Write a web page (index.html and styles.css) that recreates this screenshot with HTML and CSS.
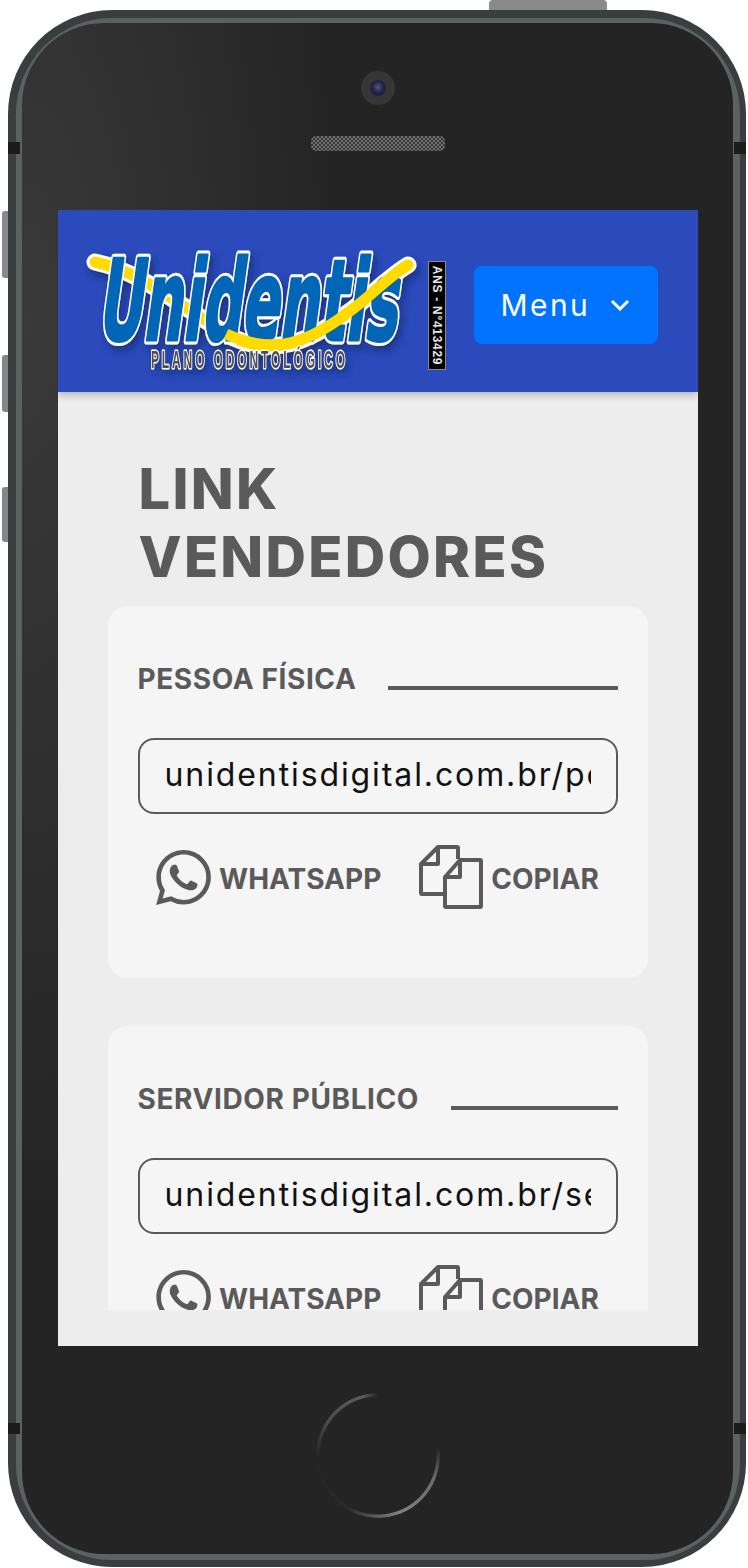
FILE: index.html
```html
<!DOCTYPE html>
<html lang="pt-BR">
<head>
    <meta charset="UTF-8">
    <meta name="viewport" content="width=device-width, initial-scale=1.0">
    <title>Link Vendedores</title>
    <link rel="stylesheet" href="styles.css">
</head>
<body>
    <svg class="icon-defs" width="0" height="0" aria-hidden="true">
        <symbol id="icon-whatsapp" viewBox="0 0 24 24">
            <path d="M17.472 14.382c-.297-.149-1.758-.867-2.03-.967-.273-.099-.471-.148-.67.15-.197.297-.767.966-.94 1.164-.173.199-.347.223-.644.075-.297-.15-1.255-.463-2.39-1.475-.883-.788-1.48-1.761-1.653-2.059-.173-.297-.018-.458.13-.606.134-.133.298-.347.446-.52.149-.174.198-.298.298-.497.099-.198.05-.371-.025-.52-.075-.149-.669-1.612-.916-2.207-.242-.579-.487-.5-.669-.51-.173-.008-.371-.01-.57-.01-.198 0-.52.074-.792.372-.272.297-1.04 1.016-1.04 2.479 0 1.462 1.065 2.875 1.213 3.074.149.198 2.096 3.2 5.077 4.487.709.306 1.262.489 1.694.625.712.227 1.36.195 1.871.118.571-.085 1.758-.719 2.006-1.413.248-.694.248-1.289.173-1.413-.074-.124-.272-.198-.57-.347m-5.421 7.403h-.004a9.87 9.87 0 01-5.031-1.378l-.361-.214-3.741.982.998-3.648-.235-.374a9.86 9.86 0 01-1.51-5.26c.001-5.45 4.436-9.884 9.888-9.884 2.64 0 5.122 1.03 6.988 2.898a9.825 9.825 0 012.893 6.994c-.003 5.45-4.437 9.884-9.885 9.884m8.413-18.297A11.815 11.815 0 0012.05 0C5.495 0 .16 5.335.157 11.892c0 2.096.547 4.142 1.588 5.945L.057 24l6.305-1.654a11.882 11.882 0 005.683 1.448h.005c6.554 0 11.89-5.335 11.893-11.893a11.821 11.821 0 00-3.48-8.413z"/>
        </symbol>
        <symbol id="icon-copy" viewBox="0 0 64 64">
            <path d="M24 49H3a1 1 0 0 1-1-1V19L19 2h19a1 1 0 0 1 1 1v11M19 2v17H2" fill="none" stroke="currentColor" stroke-width="4" stroke-linejoin="round"/>
            <path d="M26 32 41 15h20a1 1 0 0 1 1 1v45a1 1 0 0 1-1 1H27a1 1 0 0 1-1-1zM41 15v17H26" fill="none" stroke="currentColor" stroke-width="4" stroke-linejoin="round"/>
        </symbol>
    </svg>

    <div class="phone">
        <span class="side-btn side-top"></span>
        <span class="side-btn side-mute"></span>
        <span class="side-btn side-vol-up"></span>
        <span class="side-btn side-vol-down"></span>
        <span class="notch notch-tl"></span>
        <span class="notch notch-tr"></span>
        <span class="notch notch-bl"></span>
        <span class="notch notch-br"></span>

        <div class="rim">
            <div class="bezel">
                <div class="camera"><div class="lens"></div></div>
                <div class="speaker"></div>

                <div class="screen">
                    <header class="site-header">
                        <svg class="logo" viewBox="0 0 364 182" role="img" aria-label="Unidentis Plano Odontológico">
                            <defs>
                                <filter id="logoShadow" x="-10%" y="-10%" width="125%" height="130%">
                                    <feDropShadow dx="3" dy="5" stdDeviation="4" flood-color="#10205c" flood-opacity="0.65"/>
                                </filter>
                            </defs>
                            <g filter="url(#logoShadow)">
                                <path class="swoosh-edge" d="M11 52C60 62 100 100 150 128C190 146 225 132 262 104C285 88 305 66 324 55"/>
                                <path class="swoosh" d="M11 52C60 62 100 100 150 128C190 146 225 132 262 104C285 88 305 66 324 55"/>
                                <text class="logo-word logo-word-edge" x="11" y="130" textLength="300" lengthAdjust="spacingAndGlyphs" transform="skewX(-8) translate(20 0)">Unidentis</text>
                                <text class="logo-word" x="11" y="130" textLength="300" lengthAdjust="spacingAndGlyphs" transform="skewX(-8) translate(20 0)" aria-hidden="true">Unidentis</text>
                                <path class="swoosh swoosh-top" d="M142 124C190 146 225 132 262 104C285 88 305 66 324 55"/>
                                <text class="logo-sub" transform="translate(67 158) scale(0.5 1)" textLength="388" lengthAdjust="spacing">PLANO ODONTOLÓGICO</text>
                            </g>
                            <rect class="ans-box" x="344.500" y="51.500" width="17" height="108"/>
                            <text class="ans-text" transform="translate(349 105.500) rotate(90)" text-anchor="middle">ANS - N°413429</text>
                        </svg>
                        <button class="menu-btn" type="button">
                            Menu
                            <svg class="chevron" viewBox="0 0 20 12"><path d="M2 2l8 8 8-8"/></svg>
                        </button>
                    </header>

                    <main class="content">
                        <h1 class="page-title">LINK VENDEDORES</h1>

                        <section class="link-card">
                            <div class="card-head">
                                <h2>PESSOA FÍSICA</h2>
                                <span class="card-rule"></span>
                            </div>
                            <input class="link-field" type="text" readonly value="unidentisdigital.com.br/pessoa-fisica">
                            <div class="card-actions">
                                <a class="action">
                                    <svg class="icon-wpp"><use href="#icon-whatsapp"/></svg>
                                    <span class="action-label">WHATSAPP</span>
                                </a>
                                <a class="action">
                                    <svg class="icon-copy"><use href="#icon-copy"/></svg>
                                    <span class="action-label">COPIAR</span>
                                </a>
                            </div>
                        </section>

                        <section class="link-card">
                            <div class="card-head">
                                <h2>SERVIDOR PÚBLICO</h2>
                                <span class="card-rule"></span>
                            </div>
                            <input class="link-field" type="text" readonly value="unidentisdigital.com.br/servidor-publico">
                            <div class="card-actions">
                                <a class="action">
                                    <svg class="icon-wpp"><use href="#icon-whatsapp"/></svg>
                                    <span class="action-label">WHATSAPP</span>
                                </a>
                                <a class="action">
                                    <svg class="icon-copy"><use href="#icon-copy"/></svg>
                                    <span class="action-label">COPIAR</span>
                                </a>
                            </div>
                        </section>
                    </main>
                </div>

                <div class="home-btn"></div>
            </div>
        </div>
    </div>
</body>
</html>
```

FILE: styles.css
```css
body, html {
    margin: 0;
    padding: 0;
    background: #fff;
    font-family: Inter, "Liberation Sans", sans-serif;
}

.icon-defs {
    position: absolute;
}

/* Device frame */
.phone {
    position: relative;
    box-sizing: border-box;
    width: 738px;
    height: 1557px;
    margin: 10px 0 0 8px;
    padding: 8px 6px 7px 8px;
    background: #3b3e3e;
    border-radius: 104px;
}

.rim {
    height: 100%;
    box-sizing: border-box;
    padding: 5px 7px 6px 6px;
    background: #5d6161;
    border-radius: 96px;
}

.bezel {
    display: flex;
    flex-direction: column;
    align-items: center;
    height: 100%;
    box-sizing: border-box;
    padding-top: 48px;
    border-radius: 82px;
    background: radial-gradient(ellipse 320px 900px at 0 300px, #3a3a3a, #242424);
}

.side-btn {
    position: absolute;
    background: #85858a;
}

.side-top {
    top: -10px;
    left: 481px;
    width: 118px;
    height: 10px;
    background: #8a8a8a;
    border-radius: 4px 4px 0 0;
}

.side-mute,
.side-vol-up,
.side-vol-down {
    left: -6px;
    width: 6px;
    border-radius: 3px 0 0 3px;
}

.side-mute {
    top: 201px;
    height: 67px;
    background: #8a8a8a;
}

.side-vol-up {
    top: 345px;
    height: 57px;
}

.side-vol-down {
    top: 477px;
    height: 55px;
}

.notch {
    position: absolute;
    width: 12px;
    background: #1c1c1c;
}

.notch-tl, .notch-tr {
    top: 132px;
    height: 12px;
}

.notch-bl, .notch-br {
    top: 1413px;
    height: 11px;
}

.notch-tl, .notch-bl {
    left: 0;
}

.notch-tr, .notch-br {
    right: 0;
}

.camera {
    display: flex;
    align-items: center;
    justify-content: center;
    flex: none;
    width: 34px;
    height: 34px;
    border-radius: 50%;
    background: #363636;
}

.lens {
    width: 16px;
    height: 16px;
    border-radius: 50%;
    background: radial-gradient(circle at 50% 45%, #55557a 0, #25254a 45%, #14142a 100%);
}

.speaker {
    flex: none;
    width: 134px;
    height: 15px;
    margin-top: 31px;
    border-radius: 5px;
    background: repeating-conic-gradient(#6e6e6e 0 25%, #3a3a3a 0 50%) 0 0 / 4px 4px;
}

/* Screen */
.screen {
    display: flex;
    flex-direction: column;
    flex: none;
    width: 640px;
    height: 1136px;
    margin-top: 59px;
    background: #ededed;
    overflow: hidden;
}

.site-header {
    position: relative;
    z-index: 1;
    display: flex;
    align-items: center;
    flex: none;
    height: 182px;
    padding-left: 26px;
    background: #2b4bbd;
    box-shadow: 0 3px 8px rgba(0, 0, 0, 0.25);
}

.logo {
    flex: none;
    width: 364px;
    height: 182px;
    overflow: visible;
}

.swoosh-edge,
.swoosh {
    fill: none;
    stroke-linecap: round;
}

.swoosh-edge {
    stroke: #fff;
    stroke-width: 17;
}

.swoosh {
    stroke: #ffdb00;
    stroke-width: 11;
}

.swoosh-top {
    stroke-linecap: butt;
}

.logo-word {
    font-family: "DejaVu Sans", sans-serif;
    font-weight: 700;
    font-size: 112px;
    fill: #0066b5;
    stroke: #0066b5;
    stroke-width: 3px;
    stroke-linejoin: round;
}

.logo-word-edge {
    stroke: #fff;
    stroke-width: 9px;
}

.logo-sub {
    font-family: "Liberation Sans", sans-serif;
    font-weight: 700;
    font-size: 24px;
    fill: #4f4f4f;
    stroke: #fff;
    stroke-width: 3px;
    stroke-linejoin: round;
    paint-order: stroke;
}

.ans-box {
    fill: #000;
    stroke: #8a8a8a;
}

.ans-text {
    font-family: "Liberation Sans", sans-serif;
    font-weight: 700;
    font-size: 12px;
    letter-spacing: 0.7px;
    fill: #e8e8e8;
}

.menu-btn {
    display: flex;
    align-items: center;
    flex: none;
    box-sizing: border-box;
    width: 184px;
    height: 78px;
    margin: 8px 0 0 26px;
    padding: 0 0 0 27px;
    border: none;
    border-radius: 8px;
    background: #0073ff;
    color: #fff;
    font-family: Inter, sans-serif;
    font-size: 30px;
    letter-spacing: 2.4px;
}

.chevron {
    width: 20px;
    height: 12px;
    margin: 0 0 1px 20px;
    fill: none;
    stroke: #fff;
    stroke-width: 3;
}

.content {
    flex: 1;
    min-height: 0;
    margin-bottom: 36px;
    padding: 0 50px;
    overflow: hidden;
}

.page-title {
    margin: 63px 30px 15px 31px;
    color: #5a5a5a;
    font-size: 56px;
    font-weight: 800;
    letter-spacing: 2.3px;
    line-height: 68px;
}

.link-card {
    box-sizing: border-box;
    height: 372px;
    margin-bottom: 48px;
    padding: 62px 30px 0;
    border-radius: 20px;
    background: #f5f5f5;
}

.card-head {
    display: flex;
    align-items: flex-end;
    gap: 32px;
}

.card-head h2 {
    margin: 0;
    color: #5a5a5a;
    font-size: 28px;
    font-weight: 700;
    letter-spacing: 0.6px;
    line-height: 22px;
    white-space: nowrap;
}

.card-rule {
    flex: 1;
    height: 4px;
    background: #5a5a5a;
}

.link-field {
    display: block;
    box-sizing: border-box;
    width: 100%;
    height: 76px;
    margin-top: 48px;
    padding: 0 25px 3px;
    border: 2px solid #5a5a5a;
    border-radius: 16px;
    background: #f5f5f5;
    color: #111;
    font-family: Inter, sans-serif;
    font-size: 32px;
    letter-spacing: 1.9px;
    outline: none;
}

.card-actions {
    display: flex;
    justify-content: center;
    align-items: center;
    gap: 38px;
    margin-top: 31px;
}

.action {
    display: flex;
    align-items: center;
    gap: 8px;
    color: #5a5a5a;
    font-size: 28px;
    font-weight: 700;
    white-space: nowrap;
}

.action-label {
    padding-top: 3px;
}

.icon-wpp {
    width: 55px;
    height: 55px;
    fill: #5a5a5a;
}

.icon-copy {
    width: 64px;
    height: 64px;
    color: #5a5a5a;
}

/* Home button ring, fades in and out round the circle */
.home-btn {
    flex: none;
    width: 124px;
    height: 125px;
    margin-top: 47px;
    border-radius: 50%;
    background: conic-gradient(#242424 0deg, #242424 82deg, #6a6a6a 112deg, #808080 160deg, #2a2a2a 210deg, #242424 268deg, #4c4c4c 305deg, #5c5c5c 345deg, #242424 360deg);
    -webkit-mask: radial-gradient(closest-side, transparent calc(100% - 4px), #000 calc(100% - 3px));
    mask: radial-gradient(closest-side, transparent calc(100% - 4px), #000 calc(100% - 3px));
}
```
